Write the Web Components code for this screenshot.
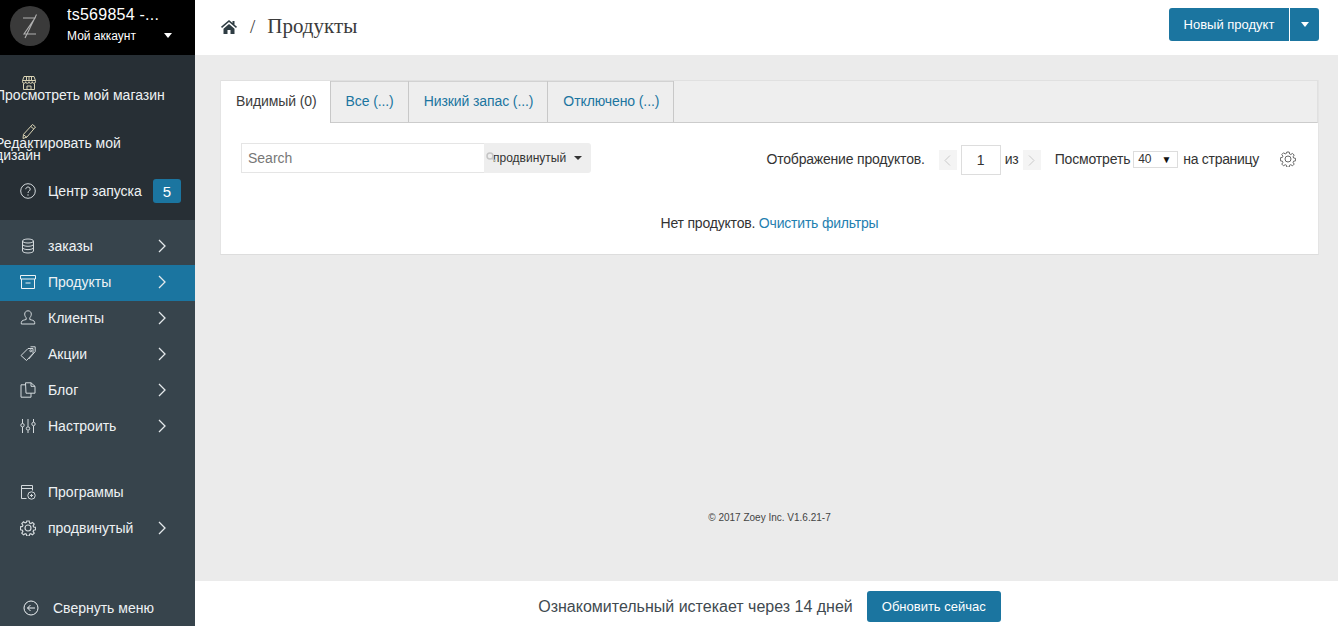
<!DOCTYPE html>
<html lang="ru"><head><meta charset="utf-8"><title>Продукты</title>
<style>
html,body{margin:0;padding:0;height:100%;overflow:hidden}
body{font:14px "Liberation Sans",Arial,sans-serif;color:#333}
app-shell{height:626px}
</style></head><body>
<script>
const ICONS={
store:'<path d="M3 1.500h10l1.500 4.200v1a1.600 1.600 0 0 1-3.200 0 1.600 1.600 0 0 1-3.300 0 1.600 1.600 0 0 1-3.300 0 1.600 1.600 0 0 1-3.200 0v-1z"/><path d="M1.500 5.500h13M5.500 1.500v4M8 1.500v4M10.500 1.500v4M2.500 8.500v6h11v-6M6 14.500v-3.500h4v3.500"/>',
pencil:'<path d="M11.500 1.500l3 2.500-8.500 10-4 1.500.5-4.200zM9.800 3.500l3 2.500M2.600 11.800l3.400 2.700"/>',
help:'<circle cx="8" cy="8" r="7.300"/><path d="M5.800 6.200a2.200 2.200 0 1 1 3.400 1.800c-.8.500-1.200 1-1.200 2"/><path d="M8 11.300v1.400"/>',
db:'<ellipse cx="8" cy="3" rx="5.500" ry="2"/><path d="M2.500 3v10c0 1.100 2.500 2 5.500 2s5.500-.9 5.500-2V3M2.500 6.300c0 1.100 2.500 2 5.500 2s5.500-.9 5.500-2M2.500 9.600c0 1.100 2.500 2 5.500 2s5.500-.9 5.500-2"/>',
box:'<path d="M.5 1.500h15v3.500H.5zM1.500 5v9.500h13V5M5.500 9h5"/>',
user:'<path d="M8 .8c-2 0-3.300 1.400-3.300 3.300 0 1.700.8 2.900 1.500 3.700v1.700c-1.500.5-4.900.7-4.900 3v1.500h13.400v-1.500c0-2.300-3.400-2.500-4.900-3V7.800c.7-.8 1.500-2 1.500-3.700C11.300 2.200 10 .8 8 .8z"/>',
tag:'<path d="M8 2.500h5V7.500L6.500 14.500 1 9.500zM10.500 .8h4.700V5.500L8.800 13"/><circle cx="10.800" cy="4.800" r="1"/>',
docs:'<path d="M6 2.800H1v12.400h10v-4M5.500 .8h5.500l4 3.500v6.900H6zM11 .8v3.500h4"/>',
sliders:'<path d="M2.500 1v4.500M2.500 9v6M8 1v7.500M8 12.500V15M13.500 1v3M13.500 8v7"/><circle cx="2.500" cy="7.200" r="1.700"/><circle cx="8" cy="10.500" r="1.700"/><circle cx="13.500" cy="6" r="1.700"/>',
app:'<path d="M6.500 14.500H1.500v-13h11v5M1.500 4.500h11"/><circle cx="11.500" cy="11.500" r="3.700"/><path d="M11.500 10v3M10 11.500h3"/>',
gear:'<path d="M6.800 1h2.400l.4 2 1.200.5 1.700-1.100 1.700 1.700-1.100 1.700.5 1.200 2 .4v2.400l-2 .4-.5 1.200 1.100 1.700-1.700 1.700-1.700-1.100-1.200.5-.4 2H6.800l-.4-2-1.200-.5-1.700 1.100-1.700-1.700 1.100-1.700-.5-1.200-2-.4V6.800l2-.4.5-1.200-1.100-1.700 1.700-1.700 1.700 1.100 1.200-.5z"/><circle cx="8" cy="8" r="3"/>',
back:'<circle cx="8" cy="8" r="7"/><path d="M12 8H4.500M7.500 5l-3 3 3 3"/>',
chev:'<path d="M2 1l6 6-6 6"/>'
};
class UiIcon extends HTMLElement{
 connectedCallback(){
  const n=this.getAttribute('name'),s=this.getAttribute('size')||16,c=n==='chev';
  this.attachShadow({mode:'open'}).innerHTML=`<style>:host{display:inline-flex;flex:none}svg{display:block}</style><svg viewBox="${c?'0 0 9 14':'0 0 16 16'}" width="${c?9:s}" height="${c?14:s}" fill="none" stroke="currentColor" stroke-width="${this.getAttribute('sw')||1}">${ICONS[n]}</svg>`;
 }
}
customElements.define('ui-icon',UiIcon);

class NavItem extends HTMLElement{
 connectedCallback(){
  const active=this.hasAttribute('active'),ch=this.hasAttribute('chevron');
  this.attachShadow({mode:'open'}).innerHTML=`<style>
  :host{display:flex;align-items:center;height:36px;box-sizing:border-box;padding:0 0 2px 20px;color:#eef2f4;font-size:14px;background:${active?'#1b75a0':'transparent'}}
  .i{width:28px;display:flex;color:${active?'#eef3f5':'#d3d9dc'}}
  .t{flex:1}
  .c{margin-right:29px;display:flex;color:#e4e9ec}
  </style><span class="i"><slot name="icon"></slot></span><span class="t"><slot></slot></span>${ch?'<span class="c"><ui-icon name="chev" sw="1.300"></ui-icon></span>':''}`;
 }
}
customElements.define('nav-item',NavItem);

class TopLink extends HTMLElement{
 connectedCallback(){
  this.attachShadow({mode:'open'}).innerHTML=`<style>
  :host{display:block;color:#eef2f4;font-size:14px;line-height:12px;width:170px;margin-left:-5px}
  .i{display:block;margin-left:26px;height:14px;color:#d9d3b4}
  </style><span class="i"><slot name="icon"></slot></span><slot></slot>`;
 }
}
customElements.define('top-link',TopLink);

class AppSidebar extends HTMLElement{
 connectedCallback(){
  this.attachShadow({mode:'open'}).innerHTML=`<style>
  :host{display:flex;flex-direction:column;width:195px;flex:none;height:626px;background:#37444c;overflow:hidden}
  .acct{height:55px;background:#000;color:#fff;display:flex;align-items:center;flex:none;padding-left:10px}
  .logo{width:40px;height:40px;border-radius:50%;background:#3a3a3a;display:flex;align-items:center;justify-content:center;flex:none;margin-right:17px;margin-top:-3px}
  .who{flex:1;display:flex;flex-direction:column;gap:6px;margin-top:-6px}
  .name{font:16px/17px "Liberation Sans",sans-serif;letter-spacing:.25px}
  .sub{display:flex;align-items:center;font-size:12px;line-height:14px;padding-right:23px;justify-content:space-between}
  .sub i{width:0;height:0;border:4px solid transparent;border-top:5px solid #fff;border-bottom:0;margin-top:-2px}
  .top{height:165px;background:#272f35;flex:none;display:flex;flex-direction:column;padding-top:20px;box-sizing:border-box}
  .main{padding-top:9px;flex:1}
  .foot{height:36px;flex:none;display:flex;align-items:center;padding-left:23px;gap:14px;color:#eef2f4}
  </style>
  <div class="acct"><div class="logo"><svg width="18" height="26" viewBox="0 0 18 26" fill="none" stroke="#b0b0b0" stroke-width="1.100"><path d="M2 5h12L3 21h12M15.500 1.500L4 25"/></svg></div>
  <div class="who"><div class="name">ts569854 -...</div><div class="sub"><span>Мой аккаунт</span><i></i></div></div></div>
  <div class="top"><slot name="top"></slot></div>
  <div class="main"><slot></slot></div>
  <div class="foot"><slot name="foot"></slot></div>`;
 }
}
customElements.define('app-sidebar',AppSidebar);

class PageHeader extends HTMLElement{
 connectedCallback(){
  this.attachShadow({mode:'open'}).innerHTML=`<style>
  :host{display:flex;align-items:center;height:55px;background:#fff;padding:0 19px 0 26px;flex:none}
  .crumb{flex:1;display:flex;align-items:center;font:21px "Liberation Serif",serif;color:#3b3b3b;margin-top:-2px}
  .sep{margin:0 12px 0 13px;font-size:19px}
  .btn{display:flex;height:33px;color:#fff;font-size:13px;margin-top:-6px}
  .a{background:#1b75a0;border-radius:3px 0 0 3px;width:120px;display:flex;align-items:center;justify-content:center}
  .b{background:#1b75a0;border-radius:0 3px 3px 0;width:29px;margin-left:1px;display:flex;align-items:center;justify-content:center}
  .b i{width:0;height:0;border:4px solid transparent;border-top:5px solid #fff;border-bottom:0}
  </style>
  <div class="crumb"><svg width="16" height="14" viewBox="0 0 16 14" fill="#2f3d43"><path d="M8 0L0 6.800l1 1.100L8 2l7 5.900 1-1.100-2.500-2.100V1h-2v2zM2.500 8.700V14h4v-4h3v4h4V8.700L8 4z"/></svg><span class="sep">/</span><span><slot></slot></span></div>
  <div class="btn"><div class="a"><slot name="action"></slot></div><div class="b"><i></i></div></div>`;
 }
}
customElements.define('page-header',PageHeader);

class TabBar extends HTMLElement{
 connectedCallback(){
  this.attachShadow({mode:'open'}).innerHTML=`<style>
  :host{display:flex;height:43px;box-sizing:border-box;background:#eee;border-bottom:1px solid #ccc;border-top:1px solid #e0e0e0;border-right:1px solid #e0e0e0}
  </style><slot></slot>`;
 }
}
customElements.define('tab-bar',TabBar);

class TabItem extends HTMLElement{
 connectedCallback(){
  const on=this.hasAttribute('active');
  this.attachShadow({mode:'open'}).innerHTML=`<style>
  :host{display:flex;align-items:center;padding:0 ${on?13:14}px 2px 15px;height:41px;box-sizing:border-box;border-right:1px solid #c8c8c8;box-shadow:inset 0 1px 0 ${on?'#fff':'#d2d2d2'};font-size:14px;letter-spacing:-.1px;
  color:${on?'#3c3c3c':'#1b75a0'};background:${on?'#fff':'#eee'};${on?'margin-bottom:-1px;height:42px;padding-bottom:3px;':''}}
  </style><slot></slot>`;
 }
}
customElements.define('tab-item',TabItem);

class ProductPanel extends HTMLElement{
 connectedCallback(){
  this.attachShadow({mode:'open'}).innerHTML=`<style>
  :host{display:block;margin:25px 19px 0 25px;background:#fff;height:175px;box-sizing:border-box;border-bottom:1px solid #ddd;border-right:1px solid #e4e4e4;border-left:1px solid #e4e4e4}
  .bar{display:flex;align-items:flex-start;padding:20px 22px 0 20px;height:78px;box-sizing:border-box}
  .search{display:flex;width:350px;height:30px;font-size:12px;color:#333}
  .in{width:243px;box-sizing:border-box;border:1px solid #e5e5e5;border-right:0;color:#777;font-size:14px;display:flex;align-items:center;padding-left:6px}
  .adv{flex:1;background:#eee;border-radius:0 3px 3px 0;display:flex;align-items:center;position:relative;padding-left:9px;gap:8px;white-space:nowrap}
  .adv svg{position:absolute;left:2px;top:9px}
  .adv i{width:0;height:0;border:4px solid transparent;border-top:4px solid #333;border-bottom:0;display:block}
  .pg{margin-left:auto;display:flex;align-items:center;height:32px;font-size:14px;color:#333;letter-spacing:-.15px}
  .nav{width:18px;height:20px;background:#f4f4f4;display:flex;align-items:center;justify-content:center;color:#c9c9c9;margin-top:2px}
  .num{width:40px;height:30px;box-sizing:border-box;border:1px solid #ddd;display:flex;align-items:center;justify-content:center;margin:2px 4px 0 4px}
  .sel{width:45px;height:17px;box-sizing:border-box;border:1px solid #ddd;font-size:12px;display:flex;align-items:center;justify-content:space-between;padding:0 6px 0 4px;margin:0 5px 0 3px}
  .sel b{font-size:10px;font-weight:400;color:#111}
  .empty{text-align:center;font-size:14px;color:#333;margin-top:14px;letter-spacing:-.2px}
  a{color:#1f80b0;text-decoration:none}
  </style>
  <slot name="tabs"></slot>
  <div class="bar">
   <div class="search"><div class="in">Search</div><div class="adv"><svg width="10" height="10" viewBox="0 0 10 10" fill="none" stroke="#c4c4c4" stroke-width="1.500"><circle cx="4" cy="4" r="3"/><path d="M6.500 6.500l3 3"/></svg><span>продвинутый</span><i></i></div></div>
   <div class="pg"><span style="margin-right:14px;letter-spacing:-.2px">Отображение продуктов.</span>
    <span class="nav"><svg width="7" height="11" viewBox="0 0 7 11" fill="none" stroke="currentColor"><path d="M6 .5l-5 5 5 5"/></svg></span>
    <span class="num">1</span><span>из</span>
    <span class="nav" style="margin-left:4px"><svg width="7" height="11" viewBox="0 0 7 11" fill="none" stroke="currentColor"><path d="M1 .5l5 5-5 5"/></svg></span>
    <span style="margin-left:14px;letter-spacing:-.15px">Посмотреть</span><span class="sel">40<b>▼</b></span><span style="letter-spacing:-.3px">на страницу</span>
    <ui-icon name="gear" size="16" style="margin-left:21px;color:#666"></ui-icon></div>
  </div>
  <div class="empty">Нет продуктов. <a>Очистить фильтры</a></div>`;
 }
}
customElements.define('product-panel',ProductPanel);

class TrialBar extends HTMLElement{
 connectedCallback(){
  this.attachShadow({mode:'open'}).innerHTML=`<style>
  :host{display:flex;align-items:center;justify-content:center;height:45px;box-sizing:border-box;background:#fff;flex:none;gap:14px;font-size:16px;color:#3f4a50;padding:4px 0 0 6px}
  .t{margin-top:2px}
  .b{background:#1b75a0;color:#fff;font-size:13px;width:134px;height:31px;border-radius:3px;display:flex;align-items:center;justify-content:center;margin-top:1px}
  </style><span class="t"><slot></slot></span><span class="b"><slot name="action"></slot></span>`;
 }
}
customElements.define('trial-bar',TrialBar);

class AppShell extends HTMLElement{
 connectedCallback(){
  this.attachShadow({mode:'open'}).innerHTML=`<style>
  :host{display:flex;width:100%;height:626px;overflow:hidden}
  .col{flex:1;min-width:0;display:flex;flex-direction:column;background:#ebebeb}
  .body{flex:1;display:flex;flex-direction:column}
  .copy{margin-top:auto;margin-bottom:58px;text-align:center;font-size:10px;color:#444;padding-left:6px}
  </style><slot name="side"></slot><div class="col"><slot name="header"></slot><div class="body"><slot></slot><div class="copy"><slot name="copy"></slot></div></div><slot name="trial"></slot></div>`;
 }
}
customElements.define('app-shell',AppShell);
</script>
<app-shell>
 <app-sidebar slot="side">
  <top-link slot="top"><ui-icon slot="icon" name="store"></ui-icon>Просмотреть мой магазин</top-link>
  <top-link slot="top" style="margin-top:22px"><ui-icon slot="icon" name="pencil"></ui-icon>Редактировать мой дизайн</top-link>
  <nav-item slot="top" style="margin-top:13px;padding-right:14px"><ui-icon slot="icon" name="help"></ui-icon><span style="display:flex;align-items:center;justify-content:space-between">Центр запуска<span style="background:#1b75a0;border-radius:3px;width:28px;height:24px;display:flex;align-items:center;justify-content:center;color:#fff;font-size:15px">5</span></span></nav-item>
  <nav-item chevron><ui-icon slot="icon" name="db"></ui-icon>заказы</nav-item>
  <nav-item chevron active><ui-icon slot="icon" name="box"></ui-icon>Продукты</nav-item>
  <nav-item chevron><ui-icon slot="icon" name="user"></ui-icon>Клиенты</nav-item>
  <nav-item chevron><ui-icon slot="icon" name="tag"></ui-icon>Акции</nav-item>
  <nav-item chevron><ui-icon slot="icon" name="docs"></ui-icon>Блог</nav-item>
  <nav-item chevron><ui-icon slot="icon" name="sliders"></ui-icon>Настроить</nav-item>
  <nav-item style="margin-top:30px"><ui-icon slot="icon" name="app"></ui-icon>Программы</nav-item>
  <nav-item chevron><ui-icon slot="icon" name="gear" sw="1.200"></ui-icon>продвинутый</nav-item>
  <ui-icon slot="foot" name="back"></ui-icon><span slot="foot">Свернуть меню</span>
 </app-sidebar>
 <page-header slot="header">Продукты<span slot="action">Новый продукт</span></page-header>
 <product-panel><tab-bar slot="tabs"><tab-item active>Видимый (0)</tab-item><tab-item>Все (...)</tab-item><tab-item>Низкий запас (...)</tab-item><tab-item>Отключено (...)</tab-item></tab-bar></product-panel>
 <span slot="copy">© 2017 Zoey Inc. V1.6.21-7</span>
 <trial-bar slot="trial">Ознакомительный истекает через 14 дней<span slot="action">Обновить сейчас</span></trial-bar>
</app-shell>
</body></html>
